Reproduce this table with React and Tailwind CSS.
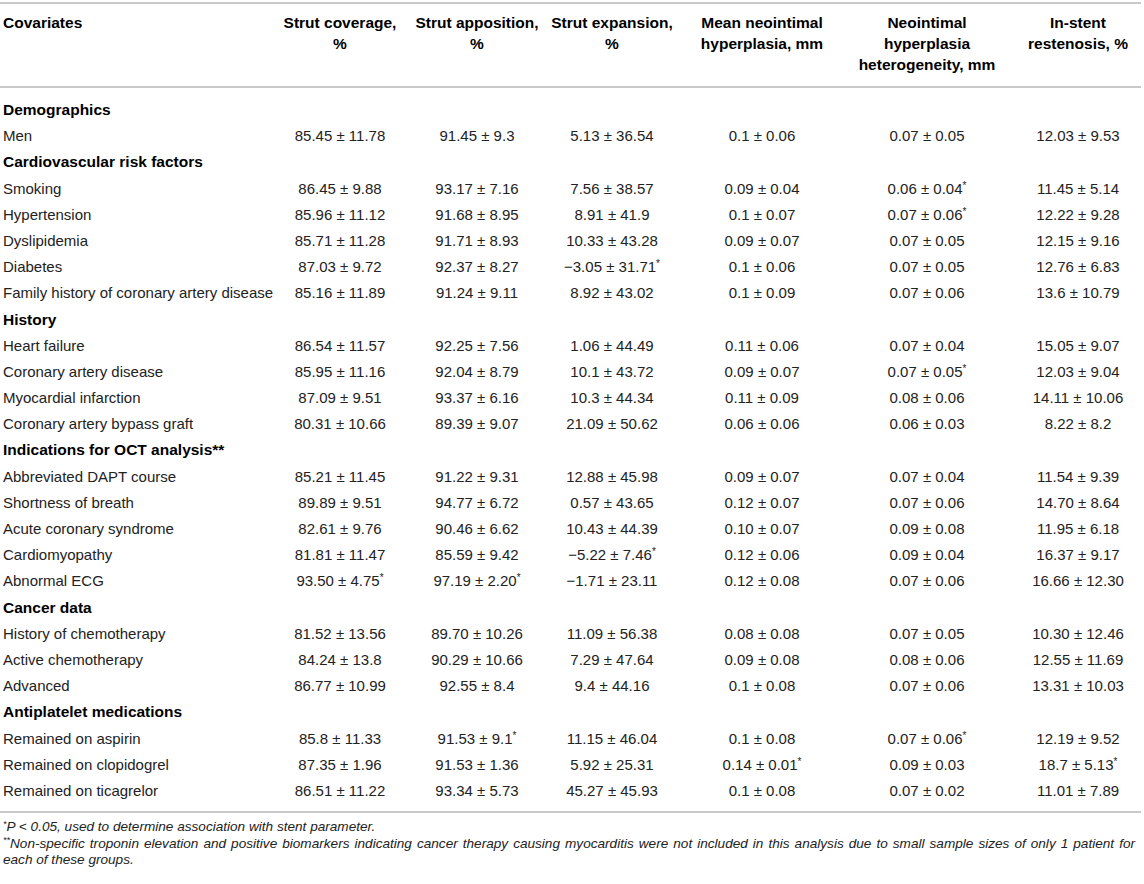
import React from 'react';

const cols = 'grid grid-cols-[265px_150px_124px_146px_154px_176px_126px]';

// rows: either a section heading (string) or [label, ...values]
const rows = [
  'Demographics',
  ['Men', '85.45 ± 11.78', '91.45 ± 9.3', '5.13 ± 36.54', '0.1 ± 0.06', '0.07 ± 0.05', '12.03 ± 9.53'],
  'Cardiovascular risk factors',
  ['Smoking', '86.45 ± 9.88', '93.17 ± 7.16', '7.56 ± 38.57', '0.09 ± 0.04', '0.06 ± 0.04*', '11.45 ± 5.14'],
  ['Hypertension', '85.96 ± 11.12', '91.68 ± 8.95', '8.91 ± 41.9', '0.1 ± 0.07', '0.07 ± 0.06*', '12.22 ± 9.28'],
  ['Dyslipidemia', '85.71 ± 11.28', '91.71 ± 8.93', '10.33 ± 43.28', '0.09 ± 0.07', '0.07 ± 0.05', '12.15 ± 9.16'],
  ['Diabetes', '87.03 ± 9.72', '92.37 ± 8.27', '−3.05 ± 31.71*', '0.1 ± 0.06', '0.07 ± 0.05', '12.76 ± 6.83'],
  ['Family history of coronary artery disease', '85.16 ± 11.89', '91.24 ± 9.11', '8.92 ± 43.02', '0.1 ± 0.09', '0.07 ± 0.06', '13.6 ± 10.79'],
  'History',
  ['Heart failure', '86.54 ± 11.57', '92.25 ± 7.56', '1.06 ± 44.49', '0.11 ± 0.06', '0.07 ± 0.04', '15.05 ± 9.07'],
  ['Coronary artery disease', '85.95 ± 11.16', '92.04 ± 8.79', '10.1 ± 43.72', '0.09 ± 0.07', '0.07 ± 0.05*', '12.03 ± 9.04'],
  ['Myocardial infarction', '87.09 ± 9.51', '93.37 ± 6.16', '10.3 ± 44.34', '0.11 ± 0.09', '0.08 ± 0.06', '14.11 ± 10.06'],
  ['Coronary artery bypass graft', '80.31 ± 10.66', '89.39 ± 9.07', '21.09 ± 50.62', '0.06 ± 0.06', '0.06 ± 0.03', '8.22 ± 8.2'],
  'Indications for OCT analysis**',
  ['Abbreviated DAPT course', '85.21 ± 11.45', '91.22 ± 9.31', '12.88 ± 45.98', '0.09 ± 0.07', '0.07 ± 0.04', '11.54 ± 9.39'],
  ['Shortness of breath', '89.89 ± 9.51', '94.77 ± 6.72', '0.57 ± 43.65', '0.12 ± 0.07', '0.07 ± 0.06', '14.70 ± 8.64'],
  ['Acute coronary syndrome', '82.61 ± 9.76', '90.46 ± 6.62', '10.43 ± 44.39', '0.10 ± 0.07', '0.09 ± 0.08', '11.95 ± 6.18'],
  ['Cardiomyopathy', '81.81 ± 11.47', '85.59 ± 9.42', '−5.22 ± 7.46*', '0.12 ± 0.06', '0.09 ± 0.04', '16.37 ± 9.17'],
  ['Abnormal ECG', '93.50 ± 4.75*', '97.19 ± 2.20*', '−1.71 ± 23.11', '0.12 ± 0.08', '0.07 ± 0.06', '16.66 ± 12.30'],
  'Cancer data',
  ['History of chemotherapy', '81.52 ± 13.56', '89.70 ± 10.26', '11.09 ± 56.38', '0.08 ± 0.08', '0.07 ± 0.05', '10.30 ± 12.46'],
  ['Active chemotherapy', '84.24 ± 13.8', '90.29 ± 10.66', '7.29 ± 47.64', '0.09 ± 0.08', '0.08 ± 0.06', '12.55 ± 11.69'],
  ['Advanced', '86.77 ± 10.99', '92.55 ± 8.4', '9.4 ± 44.16', '0.1 ± 0.08', '0.07 ± 0.06', '13.31 ± 10.03'],
  'Antiplatelet medications',
  ['Remained on aspirin', '85.8 ± 11.33', '91.53 ± 9.1*', '11.15 ± 46.04', '0.1 ± 0.08', '0.07 ± 0.06*', '12.19 ± 9.52'],
  ['Remained on clopidogrel', '87.35 ± 1.96', '91.53 ± 1.36', '5.92 ± 25.31', '0.14 ± 0.01*', '0.09 ± 0.03', '18.7 ± 5.13*'],
  ['Remained on ticagrelor', '86.51 ± 11.22', '93.34 ± 5.73', '45.27 ± 45.93', '0.1 ± 0.08', '0.07 ± 0.02', '11.01 ± 7.89'],
];

const headers = [
  ['Strut coverage,', '%'],
  ['Strut apposition,', '%'],
  ['Strut expansion,', '%'],
  ['Mean neointimal', 'hyperplasia, mm'],
  ['Neointimal', 'hyperplasia', 'heterogeneity, mm'],
  ['In-stent', 'restenosis, %'],
];

function Value({ text }) {
  // starred values get a small raised asterisk
  if (text.endsWith('*')) {
    return (
      <>
        {text.slice(0, -1)}
        <sup className="text-[10px]">*</sup>
      </>
    );
  }
  return text;
}

export default function App() {
  return (
    <div className="bg-white w-[1144px] min-h-[884px] font-['Liberation_Sans',Arial,sans-serif] text-[15px] text-[#222]">
      <div className="w-[1141px] mt-[2px] border-t-2 border-[#c9c9c9]">
        {/* Header */}
        <div className={`${cols} pt-[8px] pb-[11px] leading-[21px] text-[15.5px] font-bold text-black border-b-2 border-[#c9c9c9]`}>
          <div className="pl-[3px]">Covariates</div>
          {headers.map((lines, i) => (
            <div key={i} className="text-center whitespace-nowrap">
              {lines.map((l, j) => (
                <div key={j}>{l}</div>
              ))}
            </div>
          ))}
        </div>

        {/* Body */}
        <div className="pt-[9px] pb-[7px] border-b-2 border-[#c9c9c9]">
          {rows.map((row, i) =>
            typeof row === 'string' ? (
              <div key={i} className="h-[26.2px] leading-[26.2px] pl-[3px] text-[15.5px] font-bold text-black whitespace-nowrap">
                {row}
              </div>
            ) : (
              <div key={i} className={`${cols} h-[26.2px] leading-[26.2px]`}>
                <div className="pl-[3px] whitespace-nowrap">{row[0]}</div>
                {row.slice(1).map((v, j) => (
                  <div key={j} className="text-center whitespace-nowrap">
                    <Value text={v} />
                  </div>
                ))}
              </div>
            )
          )}
        </div>

        {/* Footnotes */}
        <div className="pt-[6px] pl-[3px] pr-[6px] italic text-[13.6px] leading-[16.5px]">
          <div>
            <sup className="text-[9px]">*</sup>P &lt; 0.05, used to determine association with stent parameter.
          </div>
          <div className="text-justify [text-align-last:justify]">
            <sup className="text-[9px]">**</sup>Non-specific troponin elevation and positive biomarkers indicating cancer therapy causing myocarditis were not included in this analysis due to small sample sizes of only 1 patient for
          </div>
          <div>each of these groups.</div>
        </div>
      </div>
    </div>
  );
}
